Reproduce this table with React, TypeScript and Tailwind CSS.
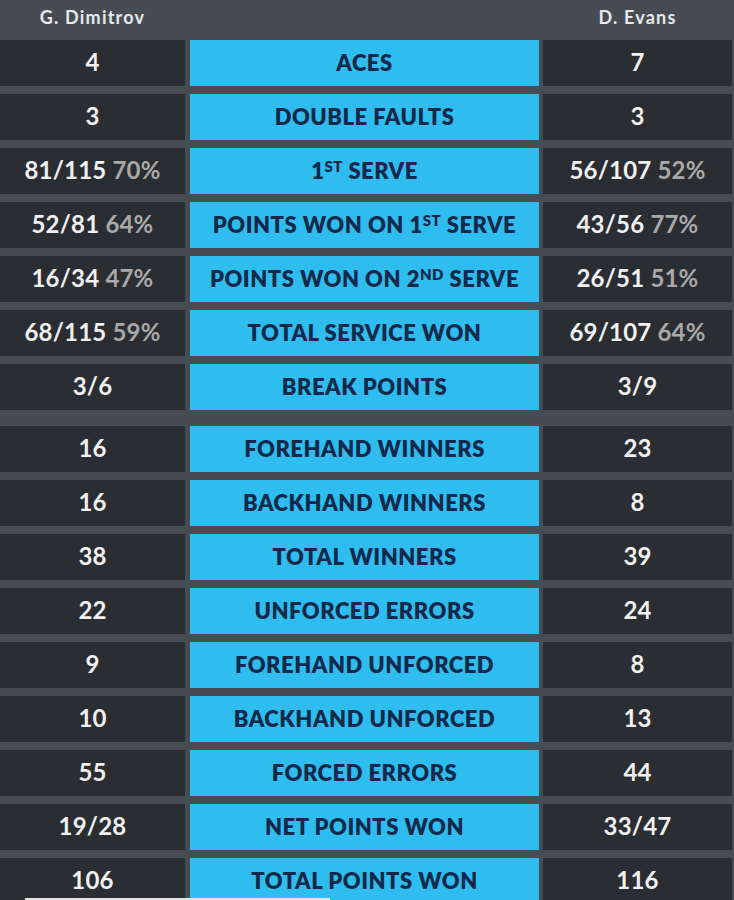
import React from 'react'

type Side = { main: string; pct?: string }

interface StatRow {
  left: Side
  label: React.ReactNode
  right: Side
  groupStart?: boolean
}

const Sup = ({ children }: { children: React.ReactNode }) => (
  <span className="relative top-[-7px] text-[15px]">{children}</span>
)

const rows: StatRow[] = [
  { left: { main: '4' }, label: 'ACES', right: { main: '7' } },
  { left: { main: '3' }, label: 'DOUBLE FAULTS', right: { main: '3' } },
  {
    left: { main: '81/115', pct: '70%' },
    label: (
      <>
        1<Sup>ST</Sup> SERVE
      </>
    ),
    right: { main: '56/107', pct: '52%' },
  },
  {
    left: { main: '52/81', pct: '64%' },
    label: (
      <>
        POINTS WON ON 1<Sup>ST</Sup> SERVE
      </>
    ),
    right: { main: '43/56', pct: '77%' },
  },
  {
    left: { main: '16/34', pct: '47%' },
    label: (
      <>
        POINTS WON ON 2<Sup>ND</Sup> SERVE
      </>
    ),
    right: { main: '26/51', pct: '51%' },
  },
  { left: { main: '68/115', pct: '59%' }, label: 'TOTAL SERVICE WON', right: { main: '69/107', pct: '64%' } },
  { left: { main: '3/6' }, label: 'BREAK POINTS', right: { main: '3/9' } },
  { left: { main: '16' }, label: 'FOREHAND WINNERS', right: { main: '23' }, groupStart: true },
  { left: { main: '16' }, label: 'BACKHAND WINNERS', right: { main: '8' } },
  { left: { main: '38' }, label: 'TOTAL WINNERS', right: { main: '39' } },
  { left: { main: '22' }, label: 'UNFORCED ERRORS', right: { main: '24' } },
  { left: { main: '9' }, label: 'FOREHAND UNFORCED', right: { main: '8' } },
  { left: { main: '10' }, label: 'BACKHAND UNFORCED', right: { main: '13' } },
  { left: { main: '55' }, label: 'FORCED ERRORS', right: { main: '44' } },
  { left: { main: '19/28' }, label: 'NET POINTS WON', right: { main: '33/47' } },
  { left: { main: '106' }, label: 'TOTAL POINTS WON', right: { main: '116' } },
]

const Value = ({ side, className }: { side: Side; className: string }) => (
  <div
    className={
      'flex items-center justify-center bg-[#2a2d32] pb-[2px] text-[24px] font-bold tracking-[0.2px] text-[#f1f1f1] ' +
      className
    }
  >
    <span>{side.main}</span>
    {side.pct && <span className="ml-[6px] text-[#a9a9a9]">{side.pct}</span>}
  </div>
)

export default function App() {
  return (
    <div
      className="min-h-screen w-[734px] overflow-hidden bg-[#464c54]"
      style={{ fontFamily: 'Lato, "Open Sans", sans-serif' }}
    >
      <div className="flex h-[40px] items-center pb-[6px] text-[18px] font-bold tracking-[1.2px] text-[#e6e8ea]">
        <div className="w-[185px] text-center">G. Dimitrov</div>
        <div className="ml-[5px] w-[349px]" />
        <div className="ml-[4px] w-[189px] text-center">D. Evans</div>
      </div>
      <div className="flex flex-col">
        {rows.map((row, i) => (
          <div
            key={i}
            className={
              'flex h-[46px] ' + (i === 0 ? '' : row.groupStart ? 'mt-[16px]' : 'mt-[8px]')
            }
          >
            <Value side={row.left} className="w-[185px]" />
            <div className="ml-[5px] flex w-[349px] items-center justify-center bg-[#2fbcee] pb-[1px] text-[22px] font-extrabold tracking-[0.5px] text-[#13294b]">
              <span>{row.label}</span>
            </div>
            <Value side={row.right} className="ml-[4px] w-[189px]" />
          </div>
        ))}
      </div>
      <div className="fixed bottom-0 left-[25px] h-[2px] w-[305px] bg-[#e4e4e4]" />
    </div>
  )
}
